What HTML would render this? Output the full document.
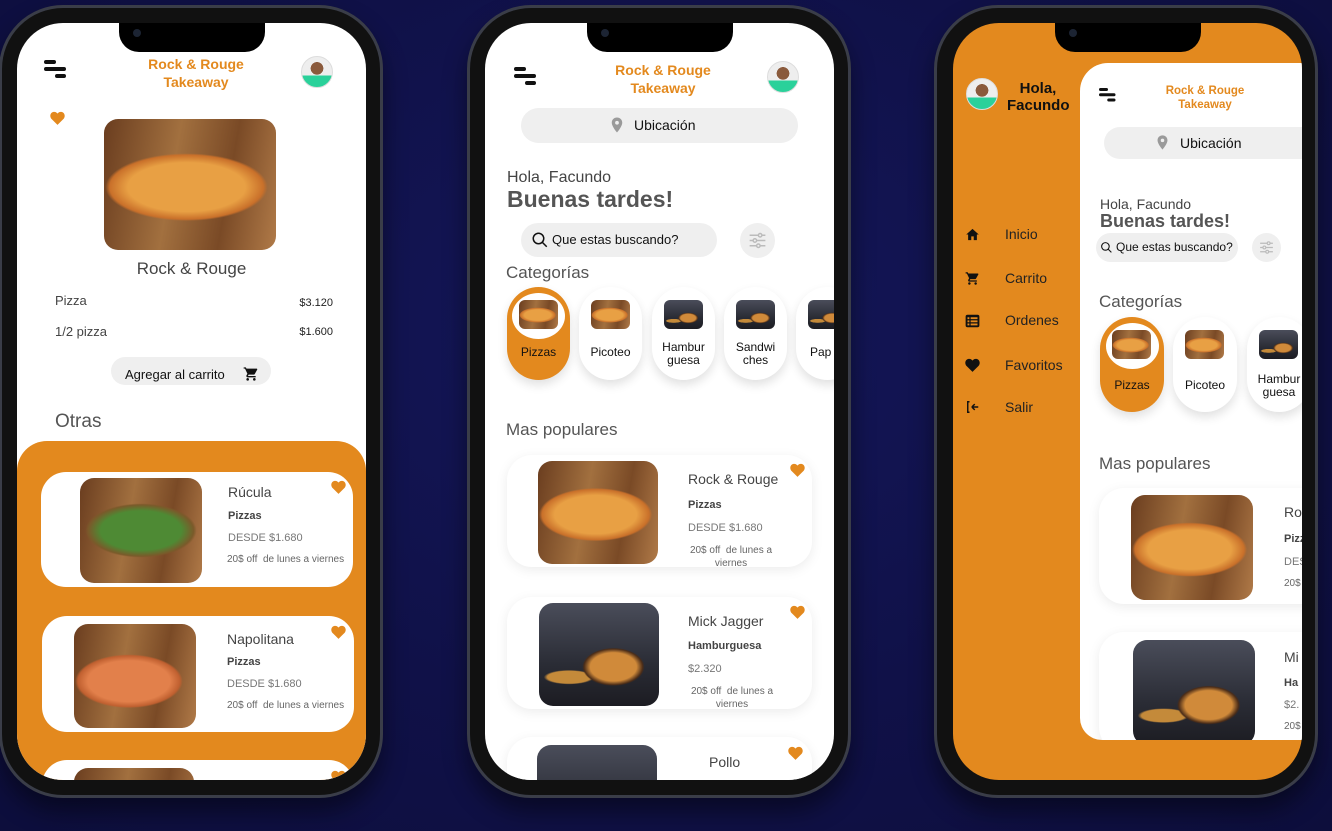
<!DOCTYPE html>
<html style="overflow:hidden;width:1332px;height:831px"><head><meta charset="utf-8"><style>
*{margin:0;padding:0;box-sizing:border-box}
body{width:1332px;height:831px;overflow:hidden;background:radial-gradient(ellipse at 50% 40%,#14175a 0%,#101148 55%,#0d0e3c 100%);font-family:"Liberation Sans",sans-serif;position:relative}
.a{position:absolute}
.phone{position:absolute;top:5px;width:384px;height:793px;border-radius:64px;background:#111;border:3px solid #3a3d48;box-shadow:0 14px 24px rgba(0,0,0,.45)}
.screen{position:absolute;top:23px;width:349px;height:757px;border-radius:46px;overflow:hidden;background:#fff}
.notch{position:absolute;top:0;left:102px;width:146px;height:29px;background:#000;border-radius:0 0 20px 20px;z-index:50}
.notch:after{content:"";position:absolute;left:14px;top:6px;width:8px;height:8px;border-radius:50%;background:#1c2433}
.ham{position:absolute;width:22px;height:18px}
.ham i{position:absolute;height:4px;background:#111;border-radius:2px}
.title{position:absolute;color:#e3891e;font-weight:bold;text-align:center;line-height:1.25}
.av{position:absolute;border-radius:50%;background:radial-gradient(circle at 50% 38%,#8a5a3c 0 26%,transparent 27%),linear-gradient(#eee 0 62%,#2ad19a 62%);border:1px solid #ddd}
.pill{position:absolute;background:#efefef;border-radius:20px}
.wood{background:radial-gradient(ellipse 62% 34% at 48% 52%,#e8a044 0 55%,#c9702a 72%,transparent 76%),linear-gradient(100deg,#6a3d1f,#a2703f 40%,#7a4a26 70%,#b07a48);}
.salad{background:radial-gradient(ellipse 60% 34% at 50% 50%,#4e8a34 0 55%,#7a5a2a 72%,transparent 76%),linear-gradient(100deg,#6a3d1f,#a2703f 40%,#7a4a26 70%,#b07a48)}
.napo{background:radial-gradient(ellipse 58% 34% at 45% 55%,#e2804b 0 58%,#c06030 72%,transparent 76%),linear-gradient(100deg,#6a3d1f,#a2703f 40%,#7a4a26 70%,#b07a48)}
.burger{background:radial-gradient(ellipse 35% 25% at 62% 62%,#d08a3a 0 55%,#4a2c18 70%,transparent 74%),radial-gradient(ellipse 30% 10% at 25% 72%,#c48a3a 0 60%,transparent 70%),linear-gradient(#4a4d5a,#2a2c35 60%,#1c1c22)}
.img{position:absolute;border-radius:14px}
.card{position:absolute;background:#fff;border-radius:25px}
.sh{box-shadow:0 3px 12px rgba(0,0,0,.08)}
.t{position:absolute;white-space:nowrap}
.heart{position:absolute;width:15px;height:14px}
.cat{position:absolute;width:63px;height:93px;border-radius:32px;background:#fff;box-shadow:0 5px 10px rgba(0,0,0,.12);text-align:center;font-size:12px;color:#111}
.cat .ci{position:absolute;left:12px;top:13px;width:39px;height:29px;border-radius:6px}
.cat.on{background:#e3891e}
.cat.on .ring{position:absolute;left:5px;top:6px;width:53px;height:46px;border-radius:50%;background:#fff}
.cat span{position:absolute;left:0;right:0;top:59px;line-height:13px}
</style></head><body>

<svg width="0" height="0" style="position:absolute"><defs>
<symbol id="hrt" viewBox="0 0 24 22"><path d="M12 22 L2.5 12.5 C-1 9 0 2 6 1.2 C9 0.8 11 2.5 12 4 C13 2.5 15 0.8 18 1.2 C24 2 25 9 21.5 12.5 Z" fill="#e3891e"/></symbol>
<symbol id="cart" viewBox="0 0 24 24"><path d="M7 18c-1.1 0-2 .9-2 2s.9 2 2 2 2-.9 2-2-.9-2-2-2zM1 2v2h2l3.6 7.6-1.4 2.4c-.7 1.3.3 3 1.8 3h12v-2H7.4l1.1-2h7.5c.8 0 1.4-.4 1.7-1l3.6-6.5c.4-.7-.1-1.5-.9-1.5H5.2L4.3 2H1zm16 16c-1.1 0-2 .9-2 2s.9 2 2 2 2-.9 2-2-.9-2-2-2z" fill="#111"/></symbol>
<symbol id="pin" viewBox="0 0 24 24"><path d="M12 2C8 2 5 5 5 9c0 5 7 13 7 13s7-8 7-13c0-4-3-7-7-7zm0 9.5a2.5 2.5 0 1 1 0-5 2.5 2.5 0 0 1 0 5z" fill="#9a9a9a"/></symbol>
<symbol id="srch" viewBox="0 0 24 24"><circle cx="10" cy="10" r="7" fill="none" stroke="#111" stroke-width="2"/><path d="M15 15l6 6" stroke="#111" stroke-width="2"/></symbol>
<symbol id="filt" viewBox="0 0 24 24"><g stroke="#bbb" stroke-width="1.6" fill="none"><path d="M3 6h18M3 12h18M3 18h18"/><circle cx="15" cy="6" r="2" fill="#efefef"/><circle cx="9" cy="12" r="2" fill="#efefef"/><circle cx="13" cy="18" r="2" fill="#efefef"/></g></symbol>
</defs></svg>

<!-- PHONE 1 -->
<div class="phone" style="left:-1px"></div>
<div class="screen" style="left:17px">
  <div class="notch"></div>
  <div class="ham" style="left:27px;top:37px"><i style="left:0;top:0;width:12px"></i><i style="left:0;top:7px;width:22px"></i><i style="left:11px;top:14px;width:11px"></i></div>
  <div class="title" style="left:104px;top:33px;width:150px;font-size:14px">Rock &amp; Rouge<br>Takeaway</div>
  <div class="av" style="left:284px;top:33px;width:32px;height:32px"></div>
  <svg class="heart" style="left:33px;top:88px"><use href="#hrt"/></svg>
  <div class="img wood" style="left:87px;top:96px;width:172px;height:131px"></div>
  <div class="t" style="left:0;width:349px;text-align:center;top:236px;font-size:17px;color:#444">Rock &amp; Rouge</div>
  <div class="t" style="left:38px;top:270px;font-size:13px;color:#444">Pizza</div>
  <div class="t" style="right:33px;top:274px;font-size:11px;color:#222">$3.120</div>
  <div class="t" style="left:38px;top:301px;font-size:13px;color:#444">1/2 pizza</div>
  <div class="t" style="right:33px;top:303px;font-size:11px;color:#222">$1.600</div>
  <div class="pill" style="left:94px;top:334px;width:160px;height:28px;border-radius:14px"></div>
  <div class="t" style="left:108px;top:344px;font-size:13px;color:#111">Agregar al carrito</div>
  <svg class="a" style="left:226px;top:343px;width:16px;height:16px"><use href="#cart"/></svg>
  <div class="t" style="left:38px;top:388px;font-size:19px;color:#555">Otras</div>
  <div class="a" style="left:0;top:418px;width:349px;height:400px;background:#e3891e;border-radius:30px 30px 0 0"></div>
  <div class="card" style="left:24px;top:449px;width:312px;height:115px">
    <div class="img salad" style="left:39px;top:6px;width:122px;height:105px"></div>
    <div class="t" style="left:187px;top:12px;font-size:14px;color:#444">Rúcula</div>
    <div class="t" style="left:187px;top:38px;font-size:11px;font-weight:bold;color:#444">Pizzas</div>
    <div class="t" style="left:187px;top:60px;font-size:11px;color:#777">DESDE $1.680</div>
    <div class="t" style="left:186px;top:82px;font-size:10px;color:#666">20$ off&nbsp; de lunes a viernes</div>
    <svg class="heart" style="left:290px;top:8px"><use href="#hrt"/></svg>
  </div>
  <div class="card" style="left:25px;top:593px;width:312px;height:116px">
    <div class="img napo" style="left:32px;top:8px;width:122px;height:104px"></div>
    <div class="t" style="left:185px;top:15px;font-size:14px;color:#444">Napolitana</div>
    <div class="t" style="left:185px;top:40px;font-size:11px;font-weight:bold;color:#444">Pizzas</div>
    <div class="t" style="left:185px;top:62px;font-size:11px;color:#777">DESDE $1.680</div>
    <div class="t" style="left:185px;top:84px;font-size:10px;color:#666">20$ off&nbsp; de lunes a viernes</div>
    <svg class="heart" style="left:289px;top:9px"><use href="#hrt"/></svg>
  </div>
  <div class="card" style="left:25px;top:737px;width:312px;height:116px">
    <div class="img wood" style="left:32px;top:8px;width:120px;height:104px"></div>
    <svg class="heart" style="left:289px;top:10px"><use href="#hrt"/></svg>
  </div>
</div>

<!-- PHONE 2 -->
<div class="phone" style="left:467px"></div>
<div class="screen" style="left:485px">
  <div class="notch"></div>
  <div class="ham" style="left:29px;top:44px"><i style="left:0;top:0;width:12px"></i><i style="left:0;top:7px;width:22px"></i><i style="left:11px;top:14px;width:11px"></i></div>
  <div class="title" style="left:103px;top:39px;width:150px;font-size:14px">Rock &amp; Rouge<br>Takeaway</div>
  <div class="av" style="left:282px;top:38px;width:32px;height:32px"></div>
  <div class="pill" style="left:36px;top:85px;width:277px;height:35px"></div>
  <svg class="a" style="left:123px;top:92px;width:18px;height:20px"><use href="#pin"/></svg>
  <div class="t" style="left:149px;top:94px;font-size:14px;color:#111">Ubicación</div>
  <div class="t" style="left:22px;top:146px;font-size:16px;color:#444">Hola, Facundo</div>
  <div class="t" style="left:22px;top:163px;font-size:23px;font-weight:bold;color:#555">Buenas tardes!</div>
  <div class="pill" style="left:36px;top:200px;width:196px;height:34px;border-radius:17px"></div>
  <svg class="a" style="left:46px;top:208px;width:18px;height:18px"><use href="#srch"/></svg>
  <div class="t" style="left:67px;top:209px;font-size:13px;color:#111">Que estas buscando?</div>
  <div class="a" style="left:255px;top:200px;width:35px;height:35px;border-radius:50%;background:#efefef"></div>
  <svg class="a" style="left:262px;top:207px;width:21px;height:21px"><use href="#filt"/></svg>
  <div class="t" style="left:21px;top:240px;font-size:17px;color:#555">Categorías</div>
  <div class="cat on" style="left:22px;top:264px"><div class="ring"></div><div class="ci wood"></div><span>Pizzas</span></div>
  <div class="cat" style="left:94px;top:264px"><div class="ci wood"></div><span>Picoteo</span></div>
  <div class="cat" style="left:167px;top:264px"><div class="ci burger"></div><span style="top:54px">Hambur<br>guesa</span></div>
  <div class="cat" style="left:239px;top:264px"><div class="ci burger"></div><span style="top:54px">Sandwi<br>ches</span></div>
  <div class="cat" style="left:311px;top:264px"><div class="ci burger"></div><span style="text-align:left;left:14px">Pap</span></div>
  <div class="t" style="left:21px;top:397px;font-size:17px;color:#555">Mas populares</div>
  <div class="card sh" style="left:22px;top:432px;width:305px;height:112px">
    <div class="img wood" style="left:31px;top:6px;width:120px;height:103px"></div>
    <div class="t" style="left:181px;top:16px;font-size:14px;color:#444">Rock &amp; Rouge</div>
    <div class="t" style="left:181px;top:44px;font-size:11px;font-weight:bold;color:#444">Pizzas</div>
    <div class="t" style="left:181px;top:67px;font-size:11px;color:#777">DESDE $1.680</div>
    <div class="t" style="left:174px;width:100px;top:89px;font-size:10px;color:#666;text-align:center;line-height:13px;white-space:normal">20$ off&nbsp; de lunes a viernes</div>
    <svg class="heart" style="left:283px;top:8px"><use href="#hrt"/></svg>
  </div>
  <div class="card sh" style="left:22px;top:574px;width:305px;height:112px">
    <div class="img burger" style="left:32px;top:6px;width:120px;height:103px"></div>
    <div class="t" style="left:181px;top:16px;font-size:14px;color:#444">Mick Jagger</div>
    <div class="t" style="left:181px;top:43px;font-size:11px;font-weight:bold;color:#444">Hamburguesa</div>
    <div class="t" style="left:181px;top:66px;font-size:11px;color:#777">$2.320</div>
    <div class="t" style="left:175px;width:100px;top:88px;font-size:10px;color:#666;text-align:center;line-height:13px;white-space:normal">20$ off&nbsp; de lunes a viernes</div>
    <svg class="heart" style="left:283px;top:8px"><use href="#hrt"/></svg>
  </div>
  <div class="card sh" style="left:22px;top:714px;width:305px;height:112px">
    <div class="img burger" style="left:30px;top:8px;width:120px;height:103px"></div>
    <div class="t" style="left:202px;top:17px;font-size:14px;color:#444">Pollo</div>
    <svg class="heart" style="left:281px;top:9px"><use href="#hrt"/></svg>
  </div>
</div>

<!-- PHONE 3 -->
<div class="phone" style="left:934px"></div>
<div class="screen" style="left:953px;background:#e3891e">
  <div class="notch"></div>
  <div class="av" style="left:13px;top:55px;width:32px;height:32px"></div>
  <div class="t" style="left:54px;top:57px;width:62px;text-align:center;font-size:15px;font-weight:bold;color:#111;line-height:17px">Hola,<br>Facundo</div>
  <svg class="a" style="left:12px;top:204px;width:15px;height:15px" viewBox="0 0 24 24"><path d="M12 3L2 12h3v9h5v-6h4v6h5v-9h3z" fill="#111"/></svg>
  <div class="t" style="left:52px;top:203px;font-size:14px;color:#222">Inicio</div>
  <svg class="a" style="left:12px;top:248px;width:15px;height:15px"><use href="#cart"/></svg>
  <div class="t" style="left:52px;top:247px;font-size:14px;color:#222">Carrito</div>
  <svg class="a" style="left:12px;top:291px;width:15px;height:14px" viewBox="0 0 24 22"><rect x="1" y="1" width="22" height="20" rx="3" fill="#111"/><g fill="#e3891e"><rect x="4" y="5" width="3" height="3"/><rect x="9" y="5" width="11" height="3"/><rect x="4" y="10" width="3" height="3"/><rect x="9" y="10" width="11" height="3"/><rect x="4" y="15" width="3" height="3"/><rect x="9" y="15" width="11" height="3"/></g></svg>
  <div class="t" style="left:52px;top:289px;font-size:14px;color:#222">Ordenes</div>
  <svg class="a" style="left:12px;top:335px;width:15px;height:14px" viewBox="0 0 24 22"><path d="M12 22 L2.5 12.5 C-1 9 0 2 6 1.2 C9 0.8 11 2.5 12 4 C13 2.5 15 0.8 18 1.2 C24 2 25 9 21.5 12.5 Z" fill="#111"/></svg>
  <div class="t" style="left:52px;top:334px;font-size:14px;color:#222">Favoritos</div>
  <svg class="a" style="left:13px;top:377px;width:14px;height:14px" viewBox="0 0 24 24"><path d="M6 3H3v18h3M10 12h11M10 12l5-5M10 12l5 5" stroke="#111" stroke-width="2.5" fill="none"/></svg>
  <div class="t" style="left:52px;top:376px;font-size:14px;color:#222">Salir</div>

  <div class="a" style="left:127px;top:40px;width:260px;height:677px;background:#fff;border-radius:28px 0 0 22px;overflow:hidden">
    <div class="ham" style="left:19px;top:25px;transform:scale(.75);transform-origin:0 0"><i style="left:0;top:0;width:12px"></i><i style="left:0;top:7px;width:22px"></i><i style="left:11px;top:14px;width:11px"></i></div>
    <div class="title" style="left:65px;top:21px;width:120px;font-size:11.5px">Rock &amp; Rouge<br>Takeaway</div>
    <div class="pill" style="left:24px;top:64px;width:240px;height:32px;border-radius:16px"></div>
    <svg class="a" style="left:74px;top:70px;width:17px;height:19px"><use href="#pin"/></svg>
    <div class="t" style="left:100px;top:72px;font-size:14px;color:#111">Ubicación</div>
    <div class="t" style="left:20px;top:133px;font-size:14px;color:#444">Hola, Facundo</div>
    <div class="t" style="left:20px;top:148px;font-size:18px;font-weight:bold;color:#555">Buenas tardes!</div>
    <div class="pill" style="left:16px;top:170px;width:142px;height:29px;border-radius:15px"></div>
    <svg class="a" style="left:20px;top:178px;width:13px;height:13px"><use href="#srch"/></svg>
    <div class="t" style="left:36px;top:177px;font-size:12px;color:#111">Que estas buscando?</div>
    <div class="a" style="left:172px;top:170px;width:29px;height:29px;border-radius:50%;background:#efefef"></div>
    <svg class="a" style="left:178px;top:176px;width:17px;height:17px"><use href="#filt"/></svg>
    <div class="t" style="left:19px;top:229px;font-size:17px;color:#555">Categorías</div>
    <div class="cat on" style="left:20px;top:254px;width:64px;height:95px"><div class="ring" style="left:6px;top:6px"></div><div class="ci wood"></div><span style="top:62px">Pizzas</span></div>
    <div class="cat" style="left:93px;top:254px;width:64px;height:95px"><div class="ci wood"></div><span style="top:62px">Picoteo</span></div>
    <div class="cat" style="left:167px;top:254px;width:64px;height:95px"><div class="ci burger"></div><span style="top:56px">Hambur<br>guesa</span></div>
    <div class="t" style="left:19px;top:391px;font-size:17px;color:#555">Mas populares</div>
    <div class="card sh" style="left:19px;top:425px;width:260px;height:116px">
      <div class="img wood" style="left:32px;top:7px;width:122px;height:105px"></div>
      <div class="t" style="left:185px;top:16px;font-size:14px;color:#444">Ro</div>
      <div class="t" style="left:185px;top:45px;font-size:11px;font-weight:bold;color:#444">Pizz</div>
      <div class="t" style="left:185px;top:68px;font-size:11px;color:#777">DESD</div>
      <div class="t" style="left:185px;top:90px;font-size:10px;color:#666">20$</div>
    </div>
    <div class="card sh" style="left:19px;top:569px;width:260px;height:120px">
      <div class="img burger" style="left:34px;top:8px;width:122px;height:105px"></div>
      <div class="t" style="left:185px;top:17px;font-size:14px;color:#444">Mi</div>
      <div class="t" style="left:185px;top:45px;font-size:11px;font-weight:bold;color:#444">Ha</div>
      <div class="t" style="left:185px;top:67px;font-size:11px;color:#777">$2.</div>
      <div class="t" style="left:185px;top:89px;font-size:10px;color:#666">20$</div>
    </div>
  </div>
</div>
</body></html>
